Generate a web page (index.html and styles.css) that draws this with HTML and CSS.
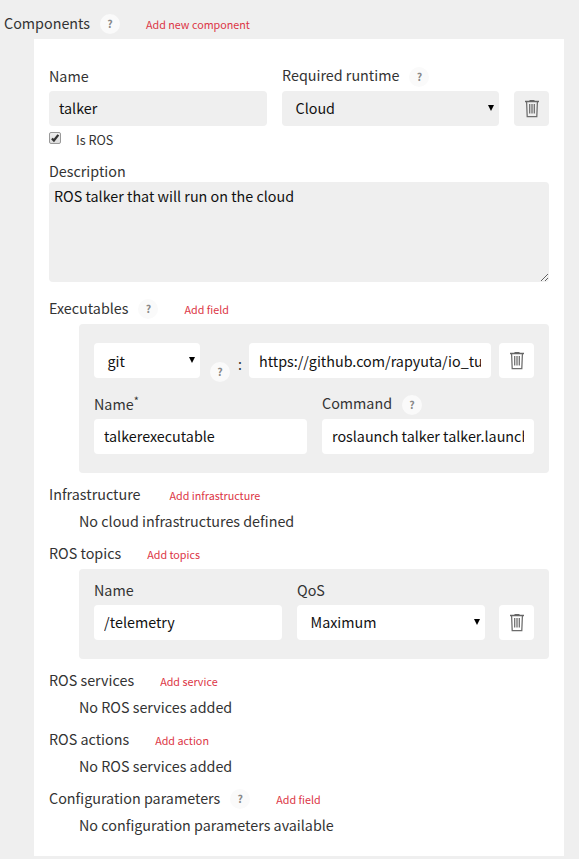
FILE: index.html
```html
<!DOCTYPE html>
<html lang="en">
<head>
<meta charset="utf-8">
<title>Components</title>
<link rel="stylesheet" href="styles.css">
</head>
<body>
<svg class="defs" width="0" height="0">
  <symbol id="trash" viewBox="0 0 14 18">
    <path d="M0 1.500H14M4.500 .6H9.500" fill="none" stroke="#666" stroke-width="1.300"/>
    <path d="M1.600 2L2.200 16.500H11.800L12.400 2M4.700 4V13.500M7 4V13.500M9.300 4V13.500" fill="none" stroke="#6c6c6c" stroke-width="1.250"/>
  </symbol>
</svg>
<main class="page">
  <header class="heading top"><span>Components</span><i class="help">?</i><a class="add">Add new component</a></header>
  <section class="card">
    <div class="runtime">
      <label class="field"><span class="label">Name</span><input value="talker"></label>
      <div class="field"><div class="label up"><span>Required runtime</span><i class="help">?</i></div><div class="select">Cloud</div></div>
      <button class="trash"><svg><use href="#trash"/></svg></button>
    </div>
    <label class="check"><span class="box"><svg viewBox="0 0 12 12"><path d="M2.300 6.500L4.700 9L10 2.200" fill="none" stroke="#333" stroke-width="2.700"/></svg></span>Is ROS</label>
    <label class="description"><span class="label">Description</span><textarea>ROS talker that will run on the cloud</textarea></label>

    <div class="heading exec"><span>Executables</span><i class="help">?</i><a class="add">Add field</a></div>
    <div class="group executable">
      <div class="source">
        <div class="select">git</div><i class="help">?</i><span class="colon">:</span>
        <input value="https://github.com/rapyuta/io_tutorials">
        <button class="trash"><svg><use href="#trash"/></svg></button>
      </div>
      <div class="pair">
        <label class="field"><span class="label">Name<sup>*</sup></span><input value="talkerexecutable"></label>
        <div class="field"><div class="label up"><span>Command</span><i class="help">?</i></div><input value="roslaunch talker talker.launch"></div>
      </div>
    </div>

    <div class="heading infra"><span>Infrastructure</span><a class="add">Add infrastructure</a></div>
    <p class="empty">No cloud infrastructures defined</p>
    <div class="heading"><span>ROS topics</span><a class="add">Add topics</a></div>
    <div class="group topic">
      <label class="field"><span class="label">Name</span><input value="/telemetry"></label>
      <div class="field"><span class="label">QoS</span><div class="select">Maximum</div></div>
      <button class="trash"><svg><use href="#trash"/></svg></button>
    </div>
    <div class="heading services"><span>ROS services</span><a class="add">Add service</a></div>
    <p class="empty">No ROS services added</p>
    <div class="heading"><span>ROS actions</span><a class="add">Add action</a></div>
    <p class="empty">No ROS services added</p>
    <div class="heading"><span>Configuration parameters</span><i class="help">?</i><a class="add">Add field</a></div>
    <p class="empty">No configuration parameters available</p>
  </section>
</main>
</body>
</html>
```
FILE: styles.css
```css
* { box-sizing: border-box; }
body { margin: 0; background: #fff; overflow: hidden; }
body, input, textarea, button {
  font-family: "Noto Sans CJK JP", "Source Sans Pro", sans-serif;
  font-size: 14.33px;
  line-height: 20px;
}
.defs { display: block; height: 0; }
.page { width: 579px; height: 859px; padding-top: 14px; background: #efefef; color: #333; }
.card { width: 530px; height: 817px; margin: 5px 0 0 34px; padding: 27px 15px 0; background: #fff; }

.heading { display: flex; align-items: baseline; height: 19px; margin-top: 13px; line-height: 18px; white-space: nowrap; }
.heading.top { height: 20px; margin: 0 0 0 4px; }
.help {
  display: block; align-self: flex-start; flex: none;
  width: 20px; height: 20px; margin-left: 10px; border-radius: 50%;
  background: #fafafa; color: #888; font-size: 10.5px; font-weight: 700; font-style: normal;
  line-height: 20px; text-align: center;
}
.add { margin-left: 26px; color: #dc3545; font-size: 10.75px; }
.infra .add { margin-left: 29px; }

.field { display: block; min-width: 0; }
.label { display: flex; align-items: baseline; height: 20px; margin-bottom: 5px; white-space: nowrap; }
.label.up { line-height: 18px; }
.label .help { margin-top: 1px; }
.label sup { align-self: flex-start; font-size: 11px; line-height: 12px; }
input, .select, textarea {
  display: block; width: 100%; height: 35px; padding: 0 10px 2px; border: 0; border-radius: 4px;
  background: #efefef; color: #111; outline: 0;
}
.select { display: flex; align-items: center; justify-content: space-between; padding: 0 5px 2px 13.5px; }
.select::after { content: ""; border: solid transparent; border-width: 6px 3px 0; border-top-color: #000; }
.trash { display: grid; place-items: center; width: 35px; height: 35px; padding: 0; border: 0; border-radius: 4px; background: #efefef; }
.trash svg { width: 14px; height: 18px; }

.runtime { display: grid; grid-template-columns: 218px 217px 35px; gap: 15px; align-items: end; }
.check { display: flex; align-items: center; gap: 15px; height: 20px; margin-top: 4px; font-size: 12.6px; }
.box { width: 12px; height: 12px; margin-top: -4px; border: 1px solid #999; border-radius: 2px; background: linear-gradient(#eee, #ddd); }
.box svg { display: block; width: 10px; height: 10px; }
.description { display: block; margin-top: 11px; }
.description .label { height: 21px; margin: 0; }
textarea { height: 100px; padding: 4px 5px; resize: both; }
.heading.exec { margin-top: 17px; }

.group { margin: 6px 0 0 30px; padding: 0 15px; border-radius: 4px; background: #efefef; }
.group input, .group .select, .group .trash { background: #fff; }
.executable { height: 149px; padding-top: 19px; }
.source { display: grid; grid-template-columns: 106px 30px 19px 242px 35px; align-items: start; }
.source input, .source .select { padding-bottom: 0; }
.source .select::after { margin-top: -2px; }
.source .help { margin-top: 19px; }
.source .colon { padding: 11px 0 0 8px; }
.source .trash { margin-left: 8px; }
.pair { display: grid; grid-template-columns: 213px 212px; gap: 15px; margin-top: 12px; }
.topic { display: grid; grid-template-columns: 188px 188px 35px; column-gap: 15px; align-items: end; align-content: start; height: 90px; padding-top: 11px; }
.topic .trash { margin-left: -1px; }
.heading.infra, .heading.services { margin-top: 12px; }
.empty { height: 20px; margin: 7px 0 0 30px; white-space: nowrap; }
```
